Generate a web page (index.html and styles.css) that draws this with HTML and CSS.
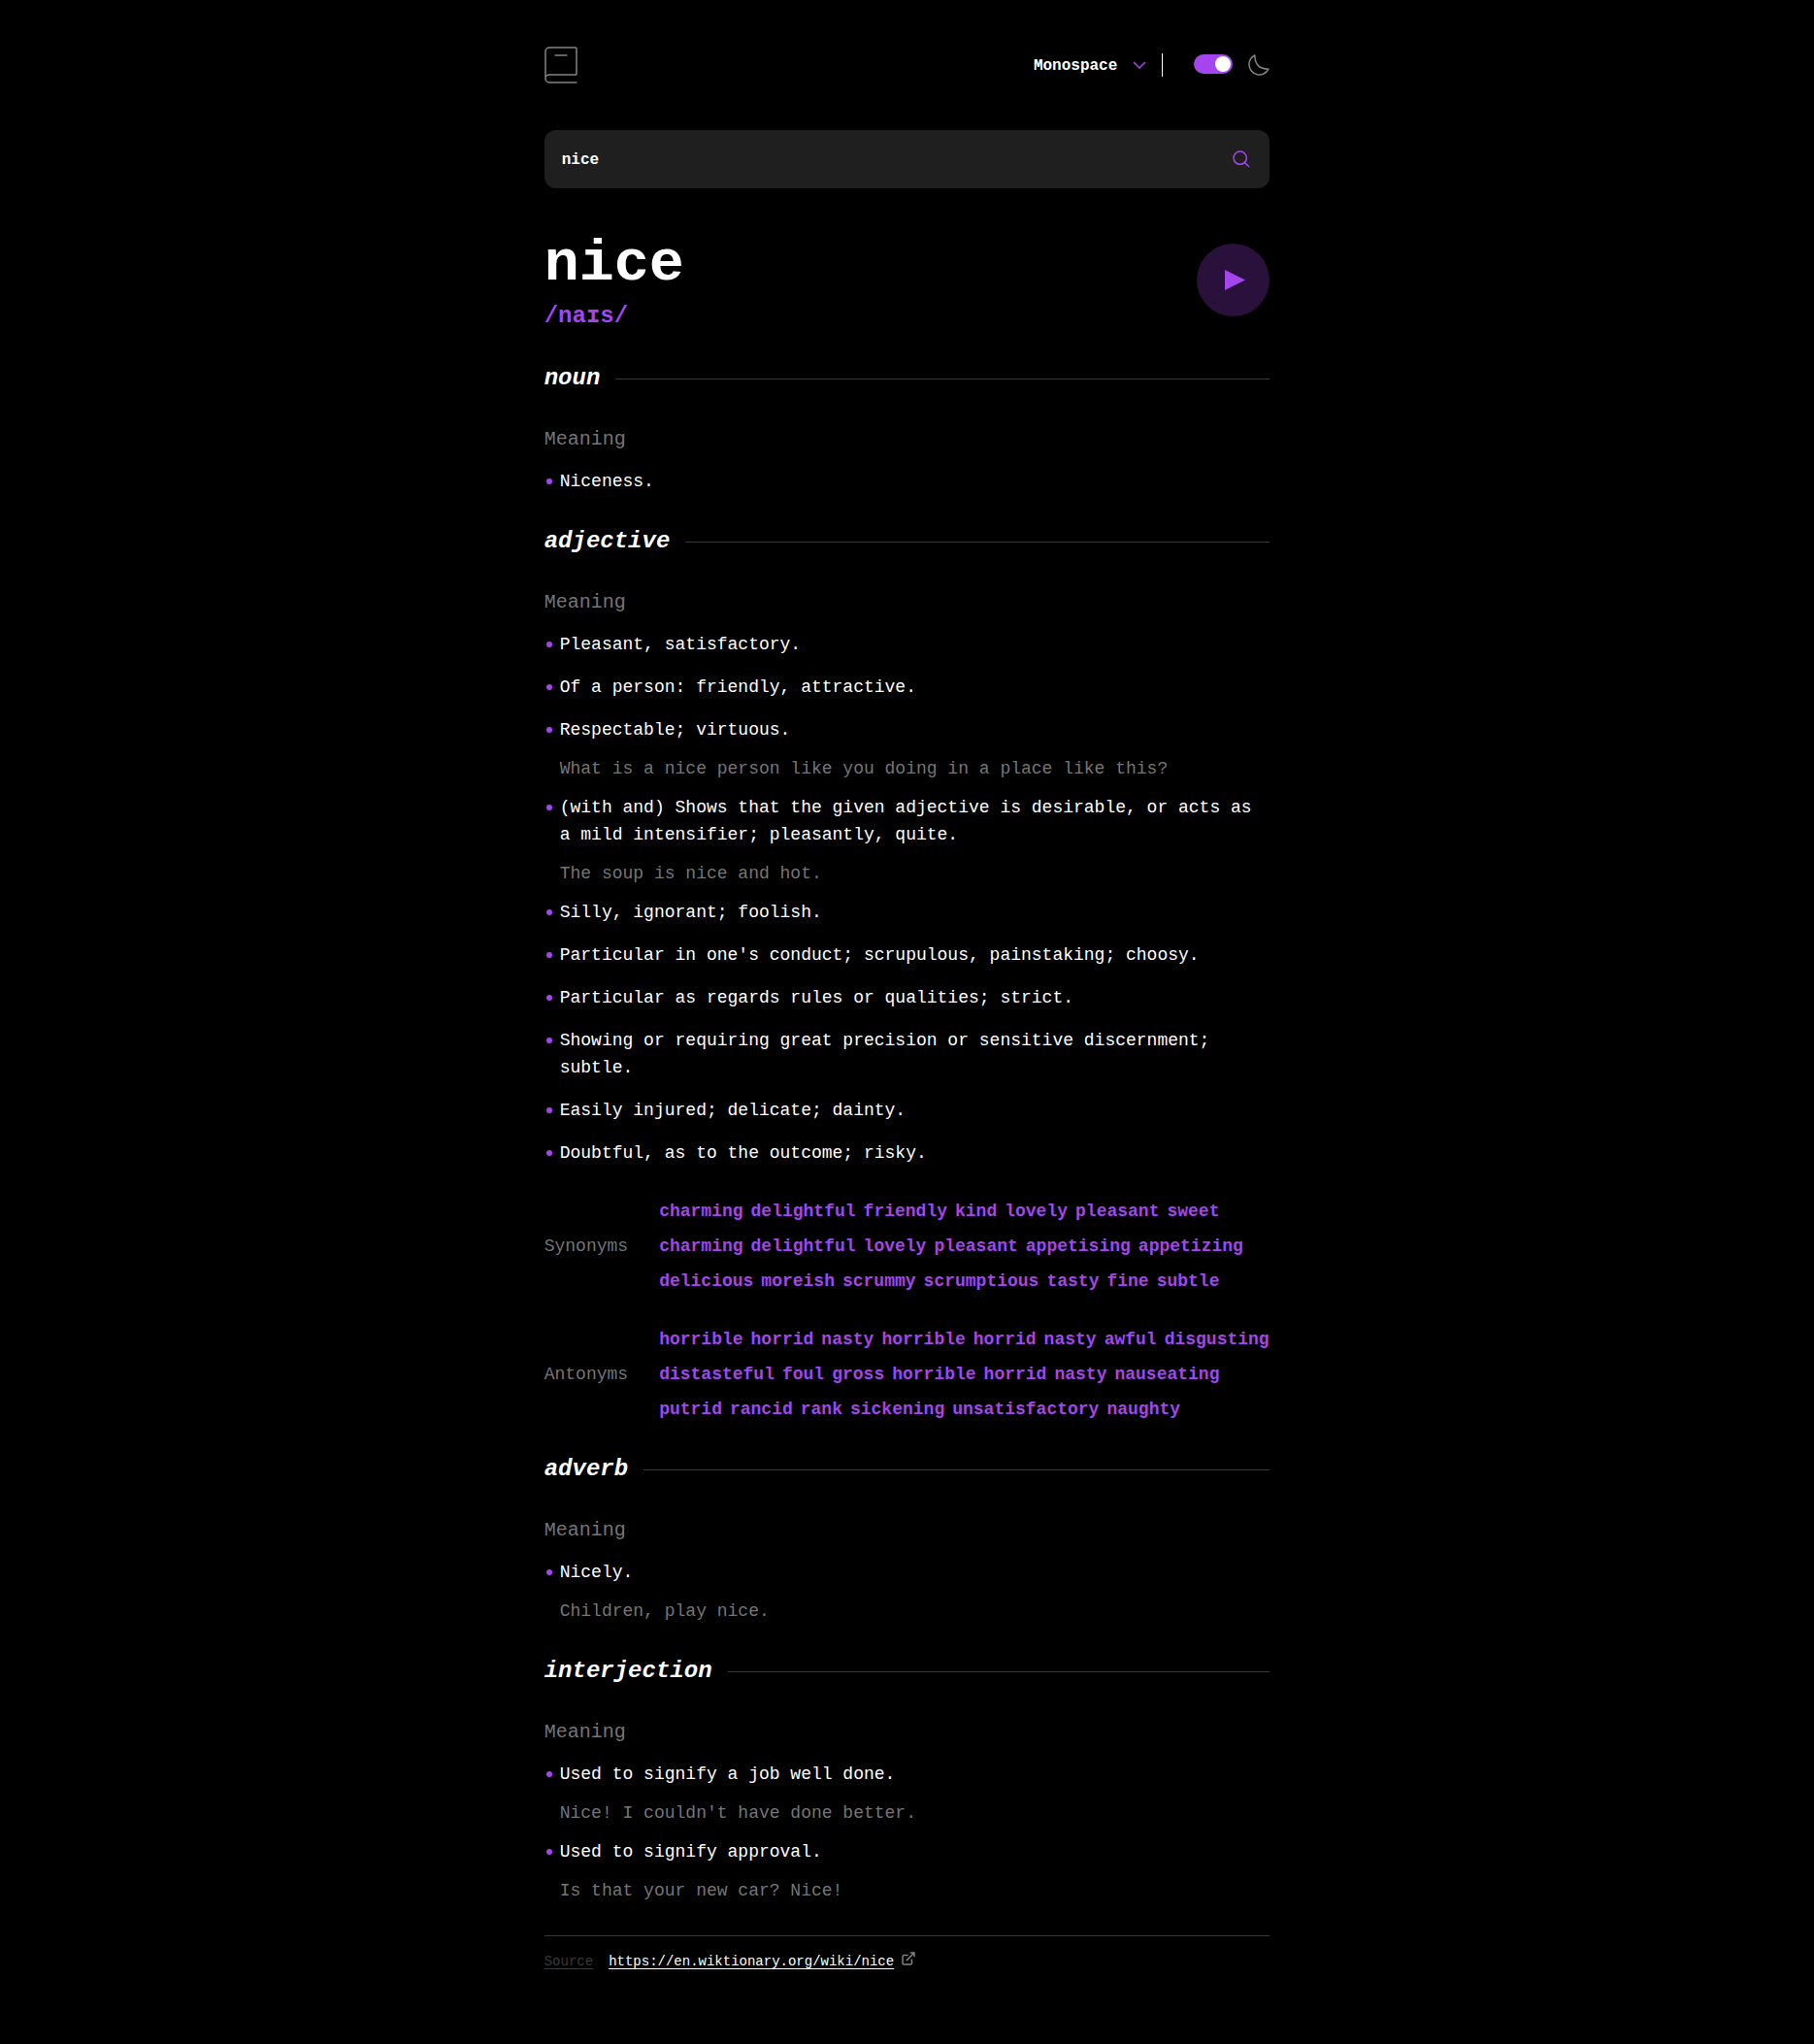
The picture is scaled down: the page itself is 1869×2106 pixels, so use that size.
FILE: index.html
```html
<!DOCTYPE html>
<html lang="en">
<head>
<meta charset="utf-8">
<title>Dictionary</title>
<link rel="stylesheet" href="styles.css">
</head>
<body>
<div class="page">
  <header class="topbar">
    <svg class="logo" width="34" height="38" viewBox="0 0 34 38" fill="none" stroke="#838383" stroke-width="1.5"><path d="M1 33V5a4 4 0 0 1 4-4h26.8A1.200 1.200 0 0 1 33 2.200V29M10.500 9h13M5 29h28M5 37h28.500M5 37a4 4 0 1 1 0-8"/></svg>
    <div class="controls">
      <div class="font-picker"><span>Monospace</span><svg width="14" height="8" viewBox="0 0 14 8" fill="none" stroke="#a445ed" stroke-width="1.5"><path d="m1 1 6 6 6-6"/></svg></div>
      <div class="divider"></div>
      <div class="toggle"><span class="knob"></span></div>
      <svg class="moon" width="22" height="22" viewBox="0 0 22 22" fill="none" stroke="#838383" stroke-width="1.5" stroke-linecap="round" stroke-linejoin="round"><path d="M1 10.449a10.544 10.544 0 0 0 19.993 4.686C11.544 15.135 6.858 10.448 6.858 1A10.545 10.545 0 0 0 1 10.449Z"/></svg>
    </div>
  </header>

  <div class="search">
    <span>nice</span>
    <svg width="18" height="18" viewBox="0 0 18 18" fill="none" stroke="#a445ed" stroke-width="1.5" stroke-linecap="round" stroke-linejoin="round"><path d="m12.663 12.663 3.887 3.887M1 7.664a6.665 6.665 0 1 0 13.330 0 6.665 6.665 0 0 0-13.330 0Z"/></svg>
  </div>

  <div class="entry">
    <div>
      <h1>nice</h1>
      <p class="phonetic">/naɪs/</p>
    </div>
    <svg class="play" width="75" height="75" viewBox="0 0 75 75" fill="#a445ed"><circle cx="37.500" cy="37.500" r="37.500" opacity=".25"/><path d="M29 27v21l21-10.500z"/></svg>
  </div>

  <section>
    <h2>noun</h2>
    <h3>Meaning</h3>
    <ul>
      <li>Niceness.</li>
    </ul>
  </section>

  <section>
    <h2>adjective</h2>
    <h3>Meaning</h3>
    <ul>
      <li>Pleasant, satisfactory.</li>
      <li>Of a person: friendly, attractive.</li>
      <li>Respectable; virtuous.<p>What is a nice person like you doing in a place like this?</p></li>
      <li>(with and) Shows that the given adjective is desirable, or acts as a mild intensifier; pleasantly, quite.<p>The soup is nice and hot.</p></li>
      <li>Silly, ignorant; foolish.</li>
      <li>Particular in one's conduct; scrupulous, painstaking; choosy.</li>
      <li>Particular as regards rules or qualities; strict.</li>
      <li>Showing or requiring great precision or sensitive discernment; subtle.</li>
      <li>Easily injured; delicate; dainty.</li>
      <li>Doubtful, as to the outcome; risky.</li>
    </ul>
    <div class="related">
      <h4>Synonyms</h4>
      <div class="words"><b>charming</b><b>delightful</b><b>friendly</b><b>kind</b><b>lovely</b><b>pleasant</b><b>sweet</b><b>charming</b><b>delightful</b><b>lovely</b><b>pleasant</b><b>appetising</b><b>appetizing</b><b>delicious</b><b>moreish</b><b>scrummy</b><b>scrumptious</b><b>tasty</b><b>fine</b><b>subtle</b></div>
    </div>
    <div class="related">
      <h4>Antonyms</h4>
      <div class="words"><b>horrible</b><b>horrid</b><b>nasty</b><b>horrible</b><b>horrid</b><b>nasty</b><b>awful</b><b>disgusting</b><b>distasteful</b><b>foul</b><b>gross</b><b>horrible</b><b>horrid</b><b>nasty</b><b>nauseating</b><b>putrid</b><b>rancid</b><b>rank</b><b>sickening</b><b>unsatisfactory</b><b>naughty</b></div>
    </div>
  </section>

  <section>
    <h2>adverb</h2>
    <h3>Meaning</h3>
    <ul>
      <li>Nicely.<p>Children, play nice.</p></li>
    </ul>
  </section>

  <section>
    <h2>interjection</h2>
    <h3>Meaning</h3>
    <ul>
      <li>Used to signify a job well done.<p>Nice! I couldn't have done better.</p></li>
      <li>Used to signify approval.<p>Is that your new car? Nice!</p></li>
    </ul>
  </section>

  <footer>
    <span class="source">Source</span>
    <span class="link">https://en.wiktionary.org/wiki/nice</span>
    <svg width="14" height="14" viewBox="0 0 14 14" fill="none" stroke="#838383" stroke-width="1.5" stroke-linecap="round" stroke-linejoin="round"><path d="M6.090 3.545H2.456A1.455 1.455 0 0 0 1 5v6.545A1.455 1.455 0 0 0 2.455 13H9a1.455 1.455 0 0 0 1.455-1.455V7.910m-5.091.727L13 1m0 0H9.364M13 1v3.636"/></svg>
  </footer>
</div>
</body>
</html>
```
FILE: styles.css
```css
* { box-sizing: border-box; margin: 0; padding: 0; }

body {
  background: #000;
  color: #fff;
  font: 18px/28px "Liberation Mono", monospace;
}

.page {
  width: 40%;
  min-height: 2106px;
  margin: 0 auto;
  padding-top: 48px;
}

svg { display: block; flex: none; }

.topbar {
  display: flex;
  justify-content: space-between;
  height: 38px;
}

.controls { display: flex; align-items: center; }

.font-picker {
  display: flex;
  align-items: center;
  gap: 16px;
  font-size: 16px;
  font-weight: 700;
}

.font-picker span, .search span { padding-top: 2px; }

.divider {
  width: 1px;
  height: 24px;
  margin: 0 32px 0 16px;
  background: #fff;
}

.toggle {
  display: flex;
  justify-content: flex-end;
  width: 40px;
  height: 20px;
  margin: 0 16px 2px 0;
  padding: 2px;
  border-radius: 10px;
  background: #a445ed;
}

.knob { width: 16px; height: 16px; border-radius: 50%; background: #fff; }

.search {
  display: flex;
  align-items: center;
  justify-content: space-between;
  height: 60px;
  margin-top: 48px;
  padding: 0 20px 0 18px;
  border-radius: 12px;
  background: #1f1f1f;
  font-size: 16px;
  font-weight: 700;
}

.entry {
  display: flex;
  align-items: center;
  justify-content: space-between;
  height: 101px;
  margin-top: 44px;
}

h1 { font-size: 60px; line-height: 68px; }

.phonetic {
  margin-top: 6px;
  color: #a445ed;
  font-size: 24px;
  font-weight: 700;
}

section { margin-top: 34px; }

.entry + section { margin-top: 37px; }

h2 {
  display: flex;
  align-items: center;
  gap: 16px;
  font-size: 24px;
  font-style: italic;
}

h2::after { content: ""; flex: 1; height: 1px; background: #3a3a3a; }

h3 {
  margin: 35px 0 15px;
  color: #757575;
  font-size: 20px;
  font-weight: 400;
}

ul { display: flex; flex-direction: column; gap: 16px; list-style: none; }

li { position: relative; padding-left: 16px; }

li:has(p):not(:last-child) { margin-bottom: -4px; }

li::before {
  content: "";
  position: absolute;
  top: 11px;
  left: 2px;
  width: 6px;
  height: 6px;
  border-radius: 50%;
  background: #a445ed;
}

li p { margin-top: 12px; color: #757575; }

.related {
  display: flex;
  align-items: center;
  gap: 32px;
  margin-top: 32px;
}

h4 { color: #757575; font-size: 18px; font-weight: 400; }

.words { display: flex; flex: 1; flex-wrap: wrap; gap: 8px; color: #a445ed; }

footer {
  display: flex;
  margin-top: 32px;
  padding-top: 16px;
  border-top: 1px solid #3a3a3a;
  font-size: 14px;
  line-height: 20px;
}

.source {
  margin-right: 16px;
  color: #3a3a3a;
}

.source, .link { text-decoration: underline; text-underline-offset: 3px; }

footer svg { margin-left: 8px; }
```
